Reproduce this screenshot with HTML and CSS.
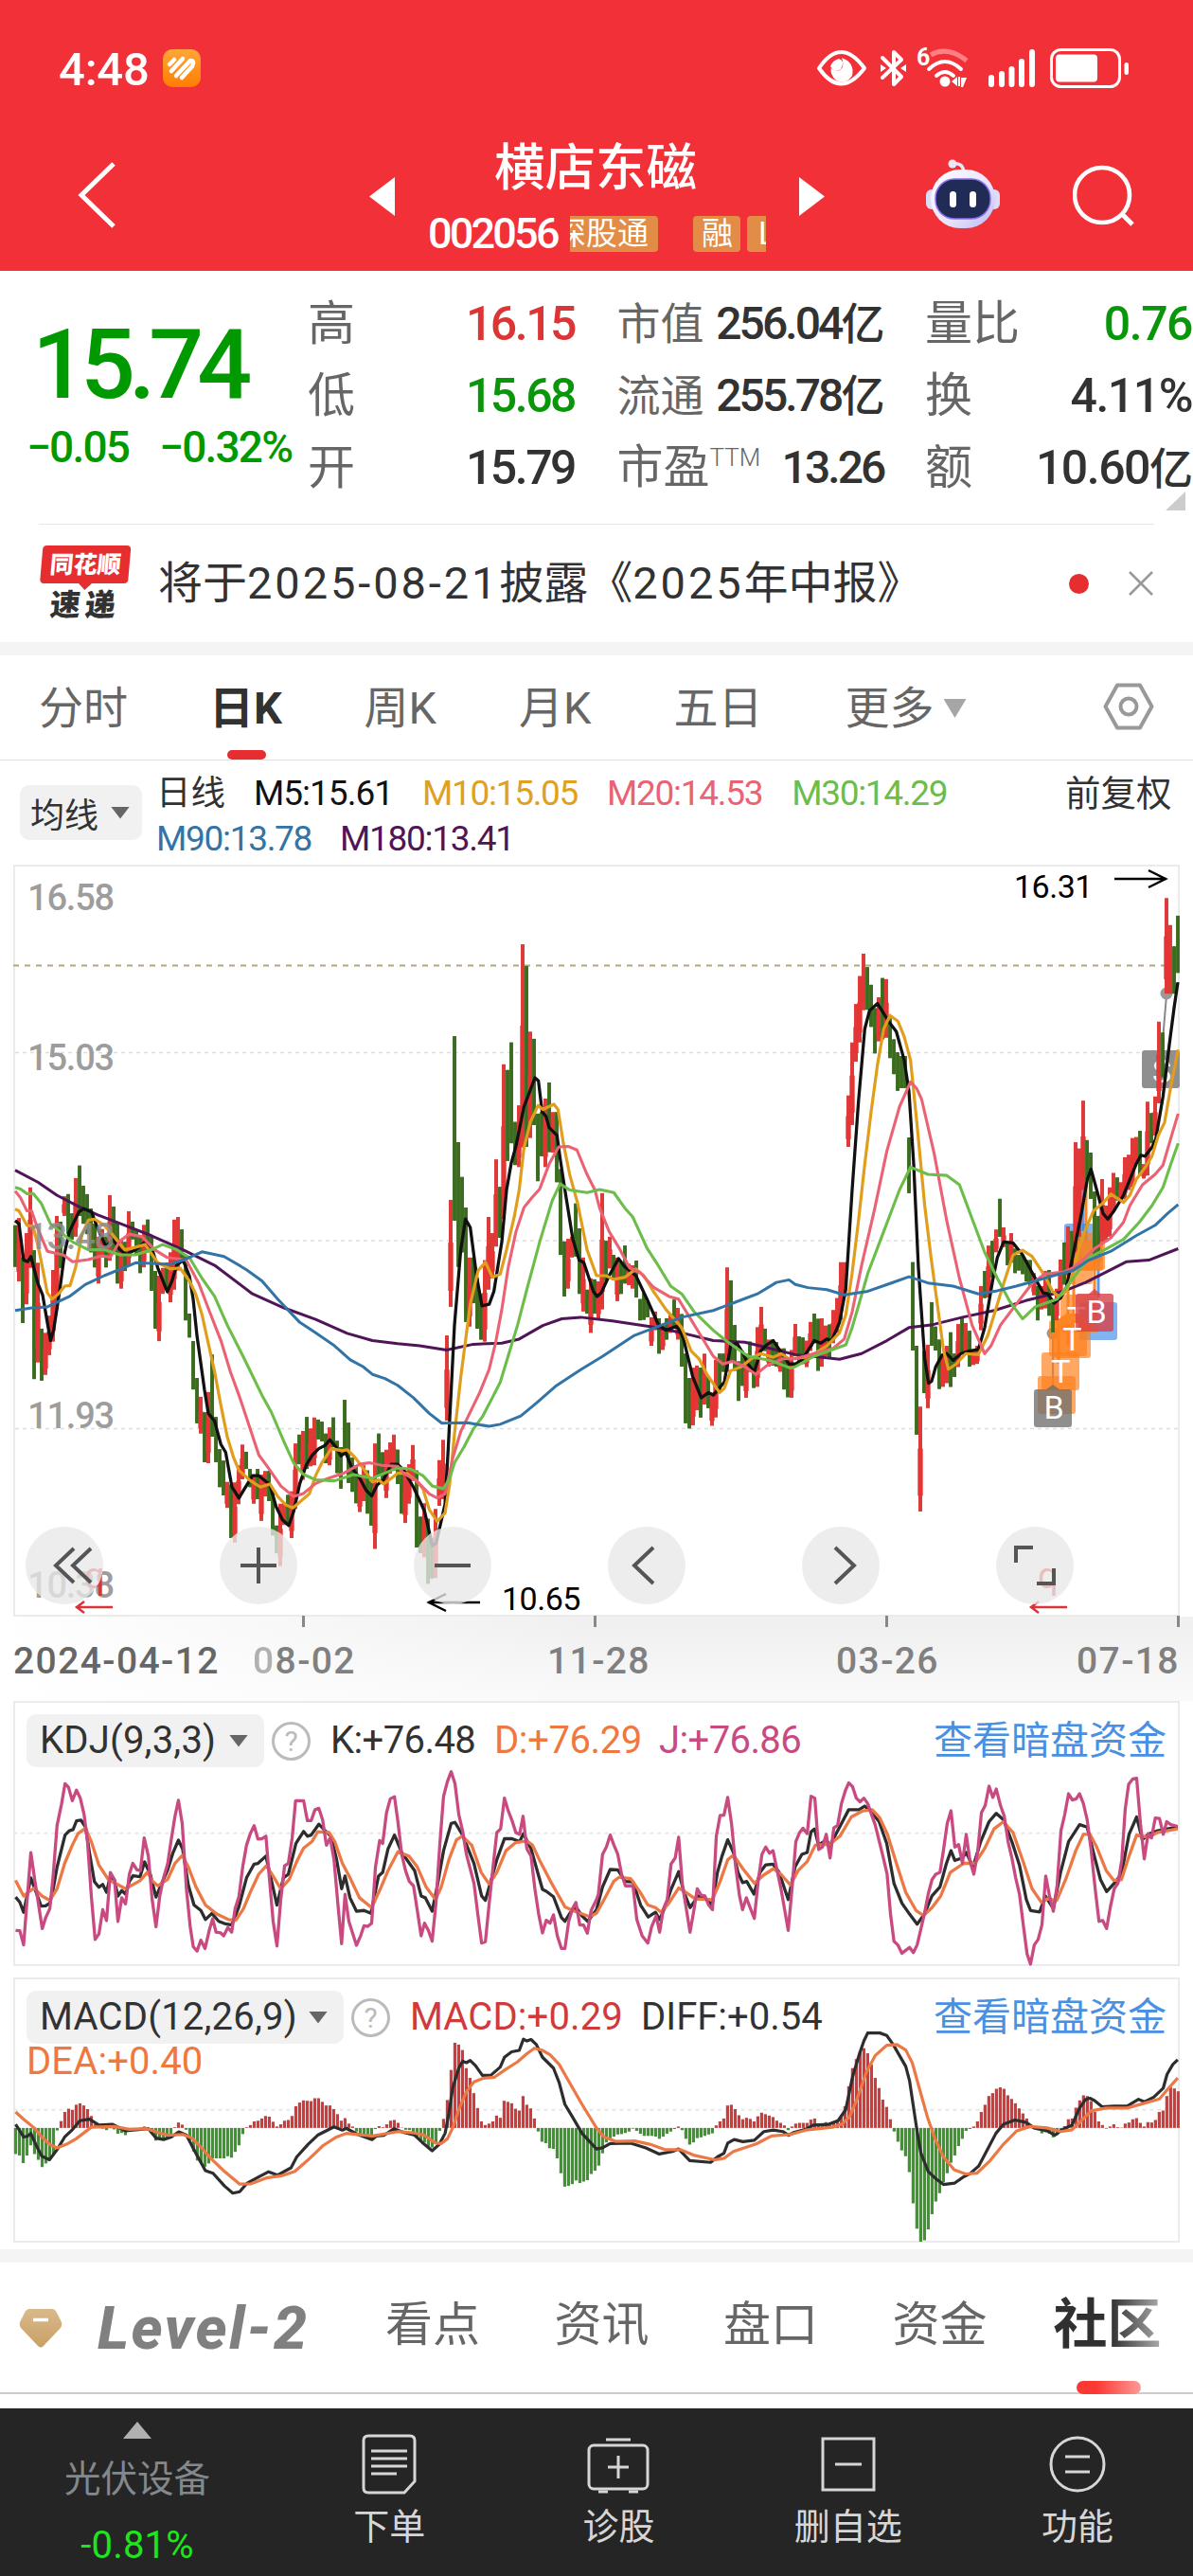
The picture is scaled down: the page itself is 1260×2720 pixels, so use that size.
FILE: index.html
```html
<!DOCTYPE html>
<html lang="zh-CN">
<head>
<meta charset="utf-8">
<title>横店东磁 002056</title>
<link rel="stylesheet" href="styles.css">
</head>
<body>
<div class="app">
  <header class="top">
    <div class="status">
      <div class="status-left"><span class="clock">4:48</span>
        <svg class="app-badge" viewBox="0 0 40 40"><defs><linearGradient id="og" x1="0" y1="0" x2="0" y2="1"><stop offset="0" stop-color="#ffa63a"/><stop offset="1" stop-color="#ff7d00"/></linearGradient></defs><rect width="40" height="40" rx="10" fill="url(#og)"/><g fill="none" stroke="#fff" stroke-width="4.500" stroke-linecap="round" stroke-linejoin="round"><path d="M7 16 L12 11"/><path d="M9 23 L21 10"/><path d="M14 28 L29 12 Q34 12 31 18 L20 30"/></g></svg>
      </div>
      <svg class="status-icons" viewBox="860 48 336 50">
        <g fill="none" stroke="#fff" stroke-width="4">
          <path d="M865 72 Q888 38 913 72 Q888 105 865 72Z" stroke-linejoin="round"/>
          <path d="M932 61 L952 81 L944 89 V55 L952 63 L932 82" stroke-linejoin="round" stroke-linecap="round"/>
          <path d="M983 58 Q1001 48 1021 64" stroke="#ff8084" stroke-width="5"/>
          <path d="M981 73 Q998 57 1015 73" stroke-linecap="round"/>
          <path d="M989 80 Q998 72 1007 80" stroke-linecap="round"/>
          <rect x="1110.500" y="52.500" width="72" height="39" rx="10" stroke-width="3"/>
        </g>
        <g fill="#fff">
          <path d="M877 70 Q879 64 886 62 Q893 64 888 73 Q882 78 878 71 Q876 78 883 85 Q893 90 900 80 Q903 66 889 61 Q893 72 885 75 Q879 75 877 70Z"/>
          <circle cx="998" cy="86" r="5.500"/>
          <path d="M930 68l6 4-6 4zM957 68l-6 4 6 4zM1005 86l6-5v10zM1012 81h2v10h-2zM1015 82h6l-4 10h-2z"/>
          <rect x="1044" y="79" width="6" height="13" rx="3"/><rect x="1055" y="75" width="6" height="17" rx="3"/><rect x="1065.500" y="70" width="6" height="22" rx="3"/><rect x="1076" y="62" width="6" height="30" rx="3"/><rect x="1087" y="52" width="6" height="40" rx="3"/>
          <rect x="1115" y="57.500" width="44" height="29" rx="4"/><rect x="1187.500" y="66" width="4.500" height="13" rx="2.200"/>
          <text x="968" y="69" class="six">6</text>
        </g>
      </svg>
    </div>
    <div class="nav">
      <svg class="back" viewBox="0 0 42 72"><path d="M38 3 L4 36 L38 69" fill="none" stroke="#fff" stroke-width="5"/></svg>
      <svg class="tri-l" viewBox="0 0 27 41"><path d="M27 0V41L0 20.500Z" fill="#fff"/></svg>
      <div class="title">
        <h1>横店东磁</h1>
        <div class="sub"><span class="code">002056</span><span class="tags"><i class="tag first">深股通</i><i class="tag">融</i><i class="tag last">L</i></span></div>
      </div>
      <svg class="tri-r" viewBox="0 0 27 41"><path d="M0 0V41L27 20.500Z" fill="#fff"/></svg>
      <svg class="robot" viewBox="0 0 78 74">
        <defs><linearGradient id="rb" x1="0" y1="0" x2="1" y2="1"><stop offset="0" stop-color="#fff"/><stop offset=".6" stop-color="#e6e3fb"/><stop offset="1" stop-color="#b9b8f5"/></linearGradient></defs>
        <path d="M28 5 Q39 3 40 14" fill="none" stroke="#e9e4f7" stroke-width="3.500"/><circle cx="28" cy="5" r="4.500" fill="#eee6f5"/>
        <rect x="0" y="32" width="12" height="21" rx="6" fill="#dcdcf6"/><rect x="66" y="32" width="12" height="21" rx="6" fill="#dcdcf6"/>
        <rect x="5" y="11" width="68" height="62" rx="31" fill="url(#rb)"/>
        <rect x="10" y="21" width="58" height="42" rx="20" fill="#202c56" stroke="#8d6df0" stroke-width="1.500"/>
        <rect x="25" y="34" width="7" height="17" rx="3.500" fill="#fff"/><rect x="46" y="34" width="7" height="17" rx="3.500" fill="#fff"/>
      </svg>
      <svg class="search" viewBox="0 0 68 68"><circle cx="31" cy="33" r="29" fill="none" stroke="#fff" stroke-width="4.600"/><path d="M51 52 L63 64" stroke="#fff" stroke-width="5"/></svg>
    </div>
  </header>

  <section class="quote">
    <div class="price-box">
      <div class="price">15.74</div>
      <div class="chg"><span>−0.05</span><span>−0.32%</span></div>
    </div>
    <div class="stats">
      <div class="cell c1"><label>高</label><b class="up">16.15</b></div>
      <div class="cell mid"><label>市值</label><b>256.04<em>亿</em></b></div>
      <div class="cell c3"><label>量比</label><b class="down">0.76</b></div>
      <div class="cell c1"><label>低</label><b class="down">15.68</b></div>
      <div class="cell mid"><label>流通</label><b>255.78<em>亿</em></b></div>
      <div class="cell c3"><label>换</label><b>4.11%</b></div>
      <div class="cell c1"><label>开</label><b>15.79</b></div>
      <div class="cell mid"><label class="wide">市盈<sup>TTM</sup></label><b>13.26</b></div>
      <div class="cell c3"><label>额</label><b>10.60<em>亿</em></b></div>
    </div>
    <i class="corner"></i>
  </section>

  <section class="news">
    <div class="ths"><span class="ths-a">同花顺</span><span class="ths-b">速递</span></div>
    <p>将于<span>2025-08-21</span>披露《<span>2025</span>年中报》</p>
    <i class="dot"></i>
    <svg class="close" viewBox="0 0 26 26"><path d="M1 1L25 25M25 1L1 25" stroke="#999" stroke-width="2.600"/></svg>
  </section>

  <nav class="periods">
    <span>分时</span><span class="on">日K</span><span>周K</span><span>月K</span><span>五日</span><span>更多<i class="caret"></i></span>
    <svg viewBox="0 0 54 50"><path d="M15 2.500H39L51.500 25L39 47.500H15L2.500 25Z" fill="none" stroke="#999" stroke-width="4" stroke-linejoin="round"/><circle cx="27" cy="25" r="8.500" fill="none" stroke="#999" stroke-width="4"/></svg>
  </nav>

  <section class="ma">
    <span class="pill">均线<i class="caret"></i></span>
    <div class="ma-list">
      <div><span class="k">日线</span><span class="m5">M5:15.61</span><span class="m10">M10:15.05</span><span class="m20">M20:14.53</span><span class="m30">M30:14.29</span></div>
      <div><span class="m90">M90:13.78</span><span class="m180">M180:13.41</span></div>
    </div>
    <span class="adj">前复权</span>
  </section>

  <section class="kline">
    <svg viewBox="0 913 1260 806">
      <g fill="none">
        <rect x="15" y="914" width="1230" height="792" stroke="#ebebeb" stroke-width="2"/>
        <path d="M16 1111.500H1244M16 1310H1244M16 1508.500H1244" stroke="#dedede" stroke-width="1.500" stroke-dasharray="4 4"/>
        <path d="M14 1019.500H1244" stroke="#b5a77a" stroke-width="2" stroke-dasharray="6 6"/>
        <path d="M320.500 1706v12M628.500 1706v12M936.500 1706v12M1244.500 1706v12" stroke="#888" stroke-width="3"/>
      </g>
      <g class="markers">
        <path d="M1232 1051L1227 1110M1112 1410V1465" stroke="#888" stroke-width="2"/>
        <circle cx="1232" cy="1049" r="6.500" fill="#999"/><circle cx="1112" cy="1408" r="6.500" fill="#999"/>
        <rect x="1206" y="1109" width="40" height="40" rx="3" fill="#8f8f8f"/>
        <text x="1227" y="1143">S</text>
        <path d="M1144 1230V1300M1160 1310V1370" stroke="#5b9bea" stroke-width="3"/>
        <path d="M1147 1240V1310M1140 1258V1330M1128 1350V1420M1134 1350V1400M1118 1395V1440M1156 1310V1366" stroke="#ff8522" stroke-width="3"/>
        <g fill="#2f80e6" fill-opacity=".6"><rect x="1124" y="1292" width="40" height="40" rx="3"/><rect x="1140" y="1375" width="40" height="40" rx="3"/></g>
        <g fill="#ff7f1a" fill-opacity=".68"><rect x="1127" y="1302" width="38" height="40" rx="3"/><rect x="1130" y="1310" width="37" height="31" rx="3"/><rect x="1118" y="1330" width="36" height="26" rx="3"/><rect x="1120" y="1367" width="40" height="40" rx="3"/><rect x="1112" y="1394" width="40" height="40" rx="3"/><rect x="1108" y="1394" width="40" height="38" rx="3"/><rect x="1100" y="1428" width="40" height="40" rx="3"/><rect x="1096" y="1453" width="40" height="40" rx="3"/></g>
        <text x="1137" y="1404">T</text>
        <path d="M1112 1397h40l-14-10h-12z" fill="#ff8522"/>
        <rect x="1136" y="1366" width="40" height="40" rx="3" fill="#d8404a" fill-opacity=".8"/>
        <path d="M1149 1367l7-6 7 6z" fill="#d8404a" fill-opacity=".8"/>
        <rect x="1092" y="1467" width="40" height="40" rx="3" fill="#707070" fill-opacity=".78"/><path d="M1105 1467l7-5 7 5z" fill="#8f7355"/>
        <text x="1132.500" y="1426">T</text><text x="1120.500" y="1460">T</text><text x="1113" y="1498">B</text><text x="1158" y="1397">B</text>
      </g>
      <g id="kdata" transform="translate(0 900) scale(.33333 .54847)"></g>
      <g class="ylab"><text x="29" y="961">16.58</text><text x="29" y="1130">15.03</text><text x="29" y="1319">13.48</text><text x="29" y="1508">11.93</text><text x="29" y="1687">10.38</text></g>
      <g class="ext"><text x="1071" y="948">16.31</text><text x="530" y="1700">10.65</text></g>
      <path d="M1177 928H1232M1213 919L1231 928L1213 937M507 1692H452M471 1683L453 1692L471 1701" fill="none" stroke="#000" stroke-width="2.500"/>
      <g class="exd"><text x="89" y="1677">q</text><text x="1096" y="1677">q</text></g>
      <path d="M119 1697H81M89 1691L81 1697L89 1703M1127 1697H1089M1097 1691L1089 1697L1097 1703" fill="none" stroke="#d9343a" stroke-width="2.500"/>
    </svg>
    <div class="tools">
      <button><svg viewBox="0 0 60 60"><path d="M40 12L21 30L40 48M58 12L39 30L58 48"/></svg></button>
      <button><svg viewBox="0 0 60 60"><path d="M11 30H49M30 11V49"/></svg></button>
      <button><svg viewBox="0 0 60 60"><path d="M11 30H49"/></svg></button>
      <button><svg viewBox="0 0 60 60"><path d="M37 11L17 30L37 49"/></svg></button>
      <button><svg viewBox="0 0 60 60"><path d="M24 11L44 30L24 49"/></svg></button>
      <button><svg viewBox="0 0 60 60"><path d="M10 27V11H28M50 33V49H32"/></svg></button>
    </div>
  </section>
  <div class="xaxis"><span>2024-04-12</span><span class="d2"><i>0</i>8-02</span><span>11-28</span><span>03-26</span><span>07-18</span></div>

  <section class="panel">
    <svg class="plot" viewBox="34.800 41.800 3066.500 731.700" preserveAspectRatio="none"><path d="M36 407H3100" class="mid-dash"/><g id="kdj"></g></svg>
    <div class="panel-head"><span class="pill kdj-pill">KDJ(9,3,3)<i class="caret"></i></span><i class="help">?</i><span class="v k">K:+76.48</span><span class="v d">D:+76.29</span><span class="v j">J:+76.86</span><a>查看暗盘资金</a></div>
  </section>
  <section class="panel second">
    <svg class="plot" viewBox="34.800 804.800 3066.500 731.700" preserveAspectRatio="none"><path d="M36 1170H3100" class="mid-dash"/><g id="macd"></g></svg>
    <div class="panel-head macd-head"><span class="pill macd-pill">MACD(12,26,9)<i class="caret"></i></span><i class="help">?</i><span class="v r">MACD:+0.29</span><span class="v k diff">DIFF:+0.54</span><a>查看暗盘资金</a></div>
    <div class="dea">DEA:+0.40</div>
  </section>

  <nav class="boards">
    <svg viewBox="0 0 46 42"><defs><linearGradient id="gd" x1="0" y1="0" x2="0" y2="1"><stop offset="0" stop-color="#d9b98c"/><stop offset="1" stop-color="#c9a063"/></linearGradient></defs><path d="M11 1H35Q38 1 40 5L45 15Q46 18 44 21L26 40Q23 43 20 40L2 21Q0 18 1 15L6 5Q8 1 11 1Z" fill="url(#gd)"/><path d="M15 12.500H31" stroke="#fff" stroke-width="3.500"/></svg>
    <span class="lv">Level-2</span><span>看点</span><span>资讯</span><span>盘口</span><span>资金</span><span class="on">社区</span>
  </nav>

  <footer class="bar">
    <div class="sector"><i></i><span>光伏设备</span><b>-0.81%</b></div>
    <div class="act"><svg viewBox="0 0 66 66"><path d="M11 3H55Q60 3 60 8V51L49 63H11Q6 63 6 58V8Q6 3 11 3Z"/><path d="M14 19H52M14 27H52M14 35H52M14 43H41"/></svg><span>下单</span></div>
    <div class="act"><svg viewBox="0 0 66 66"><rect x="2" y="13" width="62" height="46" rx="5"/><path d="M20 7H46M33 24V48M22 36H44M12 62H22M44 62H54"/></svg><span>诊股</span></div>
    <div class="act"><svg viewBox="0 0 66 66"><rect x="6" y="6" width="54" height="54"/><path d="M19 33H47"/></svg><span>删自选</span></div>
    <div class="act"><svg viewBox="0 0 66 66"><circle cx="33" cy="33" r="28"/><path d="M20 25H46M20 41H46"/></svg><span>功能</span></div>
  </footer>
</div>
<script src="chart.js"></script>
</body>
</html>
```
FILE: styles.css
```css
* { box-sizing: border-box; }
body { margin: 0; background: #fff; }
.app { width: 1260px; height: 2720px; overflow: hidden; font-family: Roboto, "Noto Sans CJK SC", sans-serif; color: #323232; background: #fff; }
i, em { font-style: normal; }
svg { display: block; flex: none; }
span { white-space: nowrap; }

.top { height: 286px; background: #f13037; color: #fff; }
.status { height: 144px; padding: 48px 64px 46px 62px; display: flex; justify-content: space-between; }
.status-left { display: flex; gap: 14px; align-items: center; }
.clock { font-size: 49px; line-height: 50px; font-weight: 500; width: 96px; letter-spacing: -.2px; padding-top: 2px; }
.app-badge { width: 40px; height: 40px; margin-top: -2px; }
.status-icons { width: 336px; height: 50px; }
.six { font: 700 25px Roboto, sans-serif; }
.nav { height: 142px; display: flex; align-items: flex-start; padding-left: 82px; }
.back { width: 42px; height: 72px; margin-top: 26px; }
.tri-l { width: 27px; height: 41px; margin: 43px 0 0 266px; }
.title { width: 427px; height: 142px; }
.title h1 { margin: 2px 0 0 -3px; font-size: 53.500px; line-height: 64px; font-weight: 500; text-align: center; }
.sub { display: flex; align-items: center; height: 38px; margin: 18px 0 0 35px; }
.code { width: 150px; font-size: 45px; line-height: 38px; font-weight: 500; letter-spacing: -2.800px; }
.tags { width: 207px; height: 38px; display: flex; overflow: hidden; font-size: 33px; line-height: 37px; }
.tag { background: #e28c47; border-radius: 4px; padding: 0 9px; margin-right: 7px; flex: none; width: 50px; }
.tag.first { width: 93px; padding: 0; text-indent: -16px; border-radius: 0 4px 4px 0; margin-right: 37px; }
.tag.last { width: 40px; margin: 0; padding-left: 12px; }
.tri-r { width: 27px; height: 41px; margin: 43px 0 0 0; }
.robot { width: 78px; height: 74px; margin: 24px 0 0 107px; }
.search { width: 68px; height: 68px; margin: 29px 0 0 77px; }

.quote { height: 268px; display: flex; position: relative; padding-top: 18px; }
.quote::after { content: ""; position: absolute; left: 41px; right: 41px; bottom: 0; height: 1px; background: #e6e6e6; }
.price-box { width: 328px; color: #009a00; padding-left: 28px; }
.price { font-size: 102px; line-height: 100px; font-weight: 500; letter-spacing: -7px; margin: 31px 0 0 6px; }
.chg { display: flex; gap: 32px; font-size: 46px; line-height: 50px; margin-top: 12px; font-weight: 500; letter-spacing: -1.800px; }
.stats { width: 932px; display: grid; grid-template-columns: 281px 283px 283px; column-gap: 42.500px; grid-auto-rows: 76px; }
.cell { display: flex; justify-content: space-between; align-items: center; font-size: 50px; line-height: 76px; white-space: nowrap; }
.cell label { color: #666; font-size: 50px; }
.cell.c1 label { margin-left: -3px; }
.cell.mid label { font-size: 46px; }
.cell.mid label.wide { font-size: 49px; }
.cell b { font-weight: 500; letter-spacing: -2.500px; margin-right: 2px; }
.cell.c3 b { letter-spacing: -1.500px; margin-right: 1px; }
.cell em { font-size: 46px; letter-spacing: -1px; }
.cell.mid b { font-size: 48px; letter-spacing: -2.900px; margin-right: 1px; }
.cell.mid b em { letter-spacing: -1px; }
.cell sup { font-size: 26px; line-height: 0; vertical-align: 18px; font-weight: 300; }
.up { color: #dc3535; }
.down { color: #0a960a; }
.corner { position: absolute; left: 1231px; top: 233px; width: 21px; height: 20px; background: #ccc; clip-path: polygon(100% 0, 100% 100%, 0 100%); }

.news { height: 124px; display: flex; align-items: center; padding-left: 42px; }
.ths { width: 96px; height: 80px; transform: skewX(-5deg); font-weight: 900; }
.ths-a { display: block; height: 40px; width: 93px; border-radius: 4px; background: #e62d30; color: #fff; font-size: 25px; line-height: 41px; text-align: center; position: relative; }
.ths-a::after { content: ""; position: absolute; left: 41px; top: 40px; border: 7px solid transparent; border-top-color: #e62d30; border-bottom: 0; }
.ths-b { display: block; font-size: 32px; line-height: 32px; letter-spacing: 5px; margin: 7px 0 0 13px; }
.news p { margin: 0 0 0 29px; width: 962px; font-size: 47px; line-height: 60px; white-space: nowrap; }
.news p span { letter-spacing: 2.900px; }
.dot { width: 21px; height: 21px; border-radius: 50%; background: #e62d30; }
.close { width: 26px; height: 26px; margin-left: 42px; }

.periods { height: 125px; border-top: 14px solid #f4f4f4; border-bottom: 1px solid #e2e2e2; display: flex; padding-left: 41px; font-size: 47px; line-height: 111px; color: #666; }
.periods span { width: 163.500px; position: relative; }
.periods span:nth-child(1) { width: 180px; }
.periods span:nth-child(5) { width: 181px; }
.periods span:nth-child(6) { width: 272px; }
.periods .on { color: #323232; font-weight: 700; }
.periods .on::after { content: ""; position: absolute; left: 19px; bottom: 0; width: 41px; height: 10px; border-radius: 5px; background: #e62d30; }
.periods svg { width: 54px; height: 50px; margin-top: 29px; }
.caret { display: inline-block; width: 20px; height: 13px; background: #666; clip-path: polygon(0 0, 100% 0, 50% 100%); }
.periods .caret { width: 24px; height: 20px; background: #a6a6a6; margin-left: 10px; vertical-align: 6px; }

.ma { height: 110px; display: flex; padding: 11px 22px 0 21px; font-size: 36px; }
.pill { background: #f1f1f1; border-radius: 10px; display: flex; align-items: center; }
.ma .pill { width: 129px; height: 58px; margin-top: 15px; padding-left: 11px; gap: 13px; }
.ma-list { margin-left: 15px; width: 960px; line-height: 48px; }
.ma-list div { display: flex; height: 48px; gap: 30px; letter-spacing: -1.300px; font-size: 37px; }
.ma-list div span + span { margin-right: 1px; }
.ma-list .m5 { letter-spacing: -1px; }
.ma-list .k { font-size: 36.500px; letter-spacing: 0; }
.m5 { color: #111; } .m10 { color: #e0a020; } .m20 { color: #ea6274; } .m30 { color: #6cbd49; } .m90 { color: #3274a6; } .m180 { color: #4f1557; }
.adj { line-height: 48px; font-size: 37.500px; }

.kline { height: 806px; position: relative; background: linear-gradient(90deg, #fff, rgba(255,255,255,0) 50%), linear-gradient(#fff 794px, #f0f0f0 794px); }
.kline > svg { width: 1260px; height: 806px; position: relative; }
.kline text { font-family: Roboto, sans-serif; }
.ylab { font-size: 38px; fill: #8c8c8c; fill-opacity: .85; letter-spacing: -1.200px; font-weight: 500; }
.ext { font-size: 34px; letter-spacing: -.5px; }
.exd { font-size: 38px; fill: #d9343a; }
.markers text { font-size: 34px; fill: #fff; text-anchor: middle; }
.tools { position: absolute; left: 27px; top: 699px; display: flex; gap: 123px; }
.tools button { width: 82px; height: 82px; padding: 11px; border: 0; border-radius: 50%; background: rgba(232, 232, 232, .78); }
.tools svg { width: 60px; height: 60px; fill: none; stroke: #555; stroke-width: 4px; }
.xaxis { height: 77px; display: flex; padding: 7px 0 0 14px; font-size: 39px; line-height: 56px; font-weight: 500; color: #808080; letter-spacing: 1.400px; background: linear-gradient(90deg, #fff, rgba(255,255,255,0) 50%), linear-gradient(#f0f0f0, #fafafa); }
.xaxis span { width: 305px; flex: none; }
.xaxis span:first-child { width: 253px; color: #666; }
.xaxis .d2 { width: 311px; }
.xaxis .d2 i { opacity: .6; }
.xaxis span:nth-child(4) { width: 254px; }
.xaxis span:nth-child(5) { width: 110px; }

.panel { height: 280px; margin: 0 14px; border: 2px solid #ebebeb; position: relative; background: #fff; }
.panel.second { margin-top: 12px; }
.plot { position: absolute; left: -2px; top: -2px; width: 1232px; height: 280px; }
.plot polyline, #kdata polyline { fill: none; vector-effect: non-scaling-stroke; stroke-linejoin: round; }
.mid-dash { stroke: #e8e8e8; stroke-width: 2px; stroke-dasharray: 4 4; vector-effect: non-scaling-stroke; }
.panel-head { position: relative; display: flex; align-items: center; height: 56px; margin: 12px 0 0 12px; font-size: 40px; line-height: 58px; }
.panel-head .pill { height: 56px; padding-left: 14px; justify-content: space-between; padding-right: 17px; letter-spacing: .2px; }
.kdj-pill { width: 251px; }
.macd-pill { width: 335px; }
.help { width: 41px; height: 41px; border: 3px solid #bbb; border-radius: 50%; color: #bbb; font-size: 30px; line-height: 36px; text-align: center; margin: 0 21px 0 8px; }
.v { width: 173px; letter-spacing: -.6px; }
.v.d { width: 174px; color: #ef7840; letter-spacing: -.4px; } .v.j { color: #c84a80; width: 290px; } .v.r { color: #d13a3a; width: 244px; letter-spacing: .1px; } .v.diff { width: 309px; letter-spacing: 0; }
.panel-head a { color: #4a90e2; font-size: 41px; }
.dea { position: relative; margin: -8px 0 0 12px; font-size: 40px; line-height: 54px; color: #ef7840; letter-spacing: .1px; }

.boards { margin-top: 7px; height: 153px; border-top: 14px solid #f4f4f4; border-bottom: 2px solid #ccc; display: flex; align-items: center; padding: 0 0 0 20px; font-size: 50px; line-height: 60px; color: #666; position: relative; }
.boards svg { width: 46px; height: 42px; }
.boards span { width: 178.500px; margin-top: -5px; }
.boards .lv { width: 304px; margin: 2px 0 0 37px; font: italic 800 63px Roboto, sans-serif; color: #808080; letter-spacing: 2.300px; }
.boards span:nth-of-type(5) { width: 170px; }
.boards .on { width: 120px; font-size: 57px; font-weight: 700; line-height: 70px; background: linear-gradient(90deg, #303030 50%, #bbb); background-clip: text; color: transparent; }
.boards::after { content: ""; position: absolute; left: 1137px; bottom: -2px; width: 68px; height: 14px; border-radius: 7px; background: linear-gradient(90deg, #fb3832 30%, #fb9a98); }

.bar { margin-top: 15px; height: 178px; background: #252525; display: flex; color: #d6d6d6; font-size: 38px; }
.sector { width: 290px; text-align: center; color: #82888c; display: flex; flex-direction: column; align-items: center; }
.sector i { width: 30px; height: 18px; background: #b0b0b0; clip-path: polygon(50% 0, 100% 100%, 0 100%); margin-top: 14px; }
.sector span { font-size: 38.500px; line-height: 50px; margin-top: 18px; }
.sector b { color: #1ee61e; font-weight: 400; font-size: 40px; line-height: 50px; margin-top: 20px; letter-spacing: .2px; }
.act { width: 242.300px; display: flex; flex-direction: column; align-items: center; padding-top: 26px; }
.act svg { width: 66px; height: 66px; fill: none; stroke: #d6d6d6; stroke-width: 3px; }
.act span { line-height: 50px; margin-top: 8px; }
```
FILE: chart.js
```js
const NS = 'http://www.w3.org/2000/svg';
function add(parent, tag, attrs) {
  const e = document.createElementNS(NS, tag);
  for (const k in attrs) e.setAttribute(k, attrs[k]);
  parent.appendChild(e);
}
// Each series is a list of segments; segment n starts at n * step.
function line(id, color, width, step, segments) {
  const pts = segments.map((s, n) => s.trim().split(/\s+/).map(p => {
    const [x, y] = p.split(',').map(Number);
    return (x + n * step) + ',' + y;
  }).join(' ')).join(' ');
  add(document.getElementById(id), 'polyline', { points: pts, stroke: color, 'stroke-width': width });
}

const candles = `g718-798 r704-826 g780-906 r733-870 r645-800 g766-1014 r790-982 g917-1017 r925-1006 r892-968 r804-942 r700-880 g711-800 r662-700 g658-735 g695-745 r627-740 g603-700 g642-715 g658-735 g686-770 g715-799 r740-830 r725-775 g740-799 r660-786 g682-770 g712-830 r745-840 g750-806 r691-797 g711-745 g728-775 g740-810 r717-799 g707-770 g740-844 g806-917 r815-941 r800-850 g790-840 r770-866 r707-842 r702-805 g726-790 g775-901 g888-934 g941-1034 g1012-1099 r1048-1119 g1078-1174 r1039-1176 g967-1125 g1087-1174 g1149-1222 g1171-1238 r1212-1262 g1217-1320 r1213-1329 r1180-1255 r1140-1207 g1154-1187 g1187-1222 r1200-1254 g1187-1245 r1198-1287 r1191-1240 g1191-1249 g1230-1315 g1296-1349 r1254-1374 r1252-1295 g1237-1295 r1230-1320 r1138-1264 g1121-1178 r1114-1208 g1087-1187 r1109-1182 r1088-1180 g1092-1130 g1096-1134 g1119-1176 r1107-1180 g1088-1145 g1133-1195 g1145-1225 g1054-1160 g1098-1214 g1165-1231 g1180-1253 r1200-1270 r1180-1249 g1190-1273 g1210-1296 r1138-1341 g1119-1200 g1155-1215 r1150-1243 r1136-1196 r1121-1190
g1150-1216 g1187-1273 r1190-1291 r1178-1254 r1141-1210 g1190-1338 g1279-1349 r1253-1357 g1283-1408 g1320-1398 r1264-1397 r1170-1258 r1131-1245 r930-1094 r669-875 g354-709 g558-798 g625-770 g684-904 r780-913 g780-868 g820-917 g850-938 r785-942 r702-842 r733-820 r591-759 g644-742 r408-706 g419-594 g366-560 g519-602 r487-606 r177-568 g219-567 r345-550 g359-525 g503-633 g500-585 r474-606 g443-577 r500-578 g500-635 g610-775 g749-855 r744-840 r740-780 g676-778 g724-850 r780-884 g842-888 r820-925 g822-888 r826-900 r656-880 g748-825 r740-801 g775-823 r780-864 g790-850 g757-830 r792-833 r795-840 g786-857 g860-901 g848-900 g864-895 r895-950 r884-920 g897-965 r910-958 g897-938 r888-925 g861-915 r877-938 g889-990 g965-1099 g1012-1109 r992-1103 r988-1074 g992-1088 r965-1063 g1010-1070 r1040-1104 r977-1088 g965-1040 g965-1000 r799-1000 g824-980 g910-998 g980-1056 g960-1027 r965-1050 g942-1000 g970-1031 r914-1029 r875-960 g917-960 r938-990 g938-988 g943-990 r955-1000 g955-1034 g975-1049 r958-1050
r908-970 g932-980 g934-985 r940-991 r904-960 g888-945 g898-998 r897-990 r911-970 g909-975 r881-945 r858-925 r789-900 r789-855 r468-567 r366-525 r292-403 r238-366 r195-304 g221-303 g255-336 g300-387 r279-364 g242-360 r244-357 g320-396 g360-427 g385-459 g392-454 g392-454 g549-656 g789-959 g950-1121 r1067-1269 g960-1041 r948-1070 g866-950 g913-959 g938-1033 r970-1029 r950-1022 g924-1029 g965-1010 r908-991 g897-965 r906-965 g921-990 r960-987 r950-985 r835-920 g806-858 r757-857 g748-818 r726-770 g667-740 r722-760 g750-795 r733-790 g763-810 g775-805 g775-812 g785-826 g785-835 r810-853 g835-901 r835-880 r806-878 g804-892 g864-924 r840-901 r784-860 g751-832 r720-814 g729-800 r558-770 r570-740 r478-650 g554-630 g578-667 g653-775 g700-775 r629-750 r680-750 r645-740 r617-690 g626-670 r635-668 r587-668 r582-650 r550-645 r548-600 g536-620 r600-628 r480-622 g502-560 r470-545 r326-483 g347-433 r88-272 r140-272 g181-272 g122-232`.split(/\s+/);
const kd = document.getElementById('kdata');
candles.forEach((c, i) => {
  const [t, b] = c.slice(1).split('-').map(Number);
  const x = 48 + i * 12, red = c[0] === 'r';
  add(kd, 'rect', { x: x - 6, y: t, width: 12, height: b - t, fill: red ? '#de3a38' : '#4a7a2e' });
  add(kd, 'rect', red
    ? { x: x - 8, y: t + (b - t) * .4, width: 16, height: (b - t) * .45, fill: '#e63333' }
    : { x: x - 4, y: t, width: 9, height: b - t, fill: '#3c6b20' });
});

line('kdata', '#4f1557', 3, 1260, [
'48,612 120,635 180,660 250,682 310,698 400,719 480,738 580,765 680,795 800,850 900,877 1000,899 1100,926 1180,940 1260,946',
'70,950 155,958 240,947 330,945 385,937 460,911 520,898 580,895 680,902 820,915 900,925 1000,940 1100,943 1180,955 1260,967',
'80,972 140,976 210,965 290,940 360,915 430,910 530,895 630,882 730,863 850,845 920,828 1050,788 1120,785 1213,763']);
line('kdata', '#111', 3.3, 1260, [
'48,709 60,715 75,785 88,788 98,778 120,830 135,852 150,905 160,940 170,920 190,840 205,770 220,730 250,692 265,686 290,692 310,725 335,758 360,746 380,765 400,774 430,765 460,750 480,760 500,800 530,846 545,825 560,795 580,785 600,815 612,860 624,930 648,1035 660,1080 680,1095 700,1140 715,1155 735,1222 757,1243 780,1220 800,1200 820,1200 855,1217 875,1260 895,1285 915,1296 930,1270 950,1215 970,1180 990,1160 1010,1148 1030,1142 1045,1131 1065,1145 1080,1162 1095,1155 1115,1185 1140,1205 1160,1228 1178,1239 1195,1218 1215,1208 1240,1178 1260,1178',
'20,1190 50,1222 85,1268 110,1335 122,1330 150,1255 160,1150 180,910 200,765 215,706 230,722 250,815 267,873 290,870 305,845 330,750 345,650 360,598 375,565 400,490 435,434 446,440 458,500 470,508 480,530 505,545 515,590 530,650 555,745 575,785 590,790 620,845 632,855 645,848 670,815 700,782 720,798 755,815 790,860 825,908 850,920 885,912 905,935 935,1010 962,1050 985,1040 1000,1045 1035,1020 1055,950 1075,945 1095,965 1110,985 1130,1000 1150,960 1170,948 1190,940 1210,958 1240,985 1260,985',
'20,978 60,940 80,945 100,937 115,940 140,905 160,840 180,650 200,480 220,340 235,305 260,291 275,305 295,325 320,345 345,400 360,460 375,600 390,800 410,975 422,1022 432,1018 445,990 465,968 480,965 500,978 525,965 550,960 580,957 600,915 625,825 640,780 660,750 690,752 720,775 760,820 785,848 800,850 820,868 840,858 858,840 880,775 905,700 925,630 937,610 955,650 975,695 990,706 1010,690 1040,660 1080,600 1095,583 1108,585 1130,568 1142,552 1165,470 1185,370 1200,300 1212,250']);
line('kdata', '#e09e1c', 3.2, 1260, [
'48,687 60,690 85,718 105,720 125,770 150,848 165,860 185,850 205,835 222,834 240,798 260,735 280,708 300,706 330,718 355,735 395,765 430,760 460,755 500,790 540,802 570,800 600,825 620,850 640,890 660,945 680,1000 700,1065 720,1125 740,1165 757,1190 790,1208 825,1222 855,1216 880,1240 905,1256 928,1262 955,1248 980,1235 1000,1200 1020,1175 1050,1148 1085,1152 1100,1150 1125,1165 1150,1185 1180,1212 1200,1208 1215,1216 1240,1205 1260,1195',
'30,1196 60,1210 80,1225 100,1265 125,1288 150,1272 165,1215 180,1120 200,1010 230,870 255,805 278,789 300,818 325,812 345,765 370,700 385,650 400,570 420,520 445,487 460,495 495,485 508,495 525,560 545,620 570,675 600,765 630,815 660,815 685,822 720,818 755,802 780,815 810,845 850,880 900,915 930,960 955,975 980,1005 1020,1040 1035,1032 1055,998 1090,990 1120,975 1150,965 1190,972 1215,965 1240,975 1260,974',
'30,972 60,965 100,950 140,925 160,890 180,810 200,710 220,600 240,500 260,410 280,340 300,314 325,325 345,355 365,400 385,520 410,680 430,780 450,870 470,960 485,995 510,985 540,965 580,967 610,930 640,870 660,830 690,775 720,766 750,778 790,815 815,845 835,855 860,845 880,810 900,760 920,725 945,690 975,675 1000,658 1040,674 1060,660 1080,630 1110,605 1130,585 1150,545 1170,520 1190,450 1213,380']);
line('kdata', '#ea6274', 3.1, 1260, [
'48,652 65,665 85,690 100,690 120,725 150,768 200,775 230,788 280,784 320,777 350,779 380,748 410,735 450,740 490,765 530,780 590,785 630,830 660,878 700,940 730,1000 760,1050 790,1105 820,1160 850,1185 890,1220 930,1240 960,1235 1000,1215 1040,1205 1090,1195 1140,1178 1170,1175 1210,1180 1260,1182',
'20,1196 60,1210 100,1235 125,1243 150,1235 175,1165 200,1115 220,1090 260,1040 290,995 310,945 330,880 350,800 375,730 400,684 425,665 450,648 480,600 510,567 540,566 568,573 600,620 625,650 640,685 670,730 700,760 735,800 770,810 810,837 860,855 890,860 930,900 970,940 1000,970 1030,985 1060,980 1100,990 1135,1005 1170,988 1220,975 1260,975',
'60,965 120,955 155,937 180,885 210,795 250,690 290,575 330,490 365,442 385,455 400,475 440,580 480,710 520,820 560,910 600,965 620,950 650,910 700,870 750,830 790,812 850,808 880,800 920,780 950,762 1000,742 1040,712 1060,680 1100,640 1140,620 1165,602 1190,550 1213,503']);
line('kdata', '#6cbd49', 3.1, 1260, [
'48,645 65,648 85,657 105,657 130,675 160,715 190,730 230,750 280,765 330,765 380,775 430,775 480,765 515,755 560,765 600,780 640,820 680,855 720,910 770,970 830,1045 860,1078 900,1135 930,1175 960,1197 1000,1208 1060,1210 1120,1198 1180,1205 1220,1195 1260,1185',
'40,1187 80,1200 110,1220 145,1225 165,1205 180,1175 210,1145 240,1110 270,1085 300,1050 325,1020 350,970 380,910 410,840 450,750 490,670 515,638 545,650 600,655 640,649 685,655 720,685 745,702 790,762 820,790 865,835 900,850 940,885 1000,920 1040,940 1110,970 1180,978 1245,993 1260,990',
'60,970 160,948 180,915 230,810 280,730 330,650 365,606 420,620 480,622 520,640 560,705 600,770 640,820 680,865 720,898 760,875 830,860 880,820 930,780 980,765 1040,745 1090,712 1130,680 1165,645 1190,600 1213,560']);
line('kdata', '#3274a6', 3, 1260, [
'48,882 100,877 150,875 220,855 270,832 330,815 400,798 430,790 540,793 580,785 640,769 710,778 780,803 830,825 880,860 950,905 1000,925 1060,950 1110,977 1150,990 1180,1005 1220,1013 1260,1026',
'50,1050 100,1080 140,1099 220,1098 290,1105 325,1101 390,1085 440,1060 500,1028 580,996 650,970 750,930 850,907 900,895 1000,882 1070,866 1140,850 1200,828 1240,823 1260,832',
'40,838 100,842 155,852 230,845 300,830 360,817 420,829 500,835 580,850 640,844 700,835 760,825 830,813 880,805 930,785 1000,768 1080,738 1140,718 1180,695 1213,678']);

line('kdj', '#2d2d2d', 3.3, 1568, [
'41,583 52,597 62,625 81,530 95,570 108,608 120,607 131,600 140,560 150,500 162,450 171,412 182,400 192,397 201,373 213,371 225,390 235,460 248,540 260,556 270,548 280,570 290,525 300,535 310,580 320,565 330,575 340,540 350,524 368,527 380,486 395,520 410,583 425,545 440,510 455,460 469,426 480,450 495,550 510,605 528,620 540,645 557,628 575,650 590,656 609,660 628,610 648,530 668,492 678,490 699,470 712,530 728,605 745,530 758,520 778,435 798,402 808,415 818,412 838,382 855,400 870,415 885,480 898,560 907,525 920,585 937,622 957,620 975,628 995,525 1006,515 1020,450 1037,412 1056,460 1090,510 1107,580 1118,585 1136,622 1150,550 1166,455 1186,380 1196,377 1216,412 1246,490 1266,580 1276,592 1290,540 1306,480 1326,422 1346,422 1366,430 1376,408 1396,450 1426,562 1436,567 1455,582 1476,640 1485,650 1500,625 1515,612 1530,635 1545,650 1568,618',
'16,555 36,507 56,508 76,540 96,541 116,605 136,638 155,625 166,645 180,612 196,562 216,513 230,570 246,612 268,580 290,590 304,605 318,515 330,470 345,425 360,460 372,515 384,543 395,540 414,575 430,515 445,494 464,492 480,515 504,590 522,500 540,465 554,460 564,403 573,395 584,440 604,425 614,440 624,420 644,380 663,342 690,342 705,332 720,345 743,375 763,435 782,545 803,600 823,630 843,658 862,630 882,580 903,555 920,490 932,455 942,482 962,475 972,460 990,500 1010,430 1032,375 1051,352 1070,370 1092,430 1112,495 1130,590 1141,620 1165,624 1180,580 1201,615 1220,515 1241,430 1270,383 1290,390 1310,475 1325,535 1341,568 1361,545 1380,520 1400,410 1420,362 1435,425 1450,410 1475,400 1528,390']);
line('kdj', '#ec7845', 3.3, 1568, [
'41,537 62,580 90,558 110,580 131,592 150,560 170,490 190,440 205,408 225,393 240,430 260,495 285,535 330,560 368,538 388,514 400,538 415,552 440,535 460,490 479,468 495,500 515,555 540,605 570,630 600,645 620,647 640,615 660,565 680,520 700,497 715,520 738,560 760,535 780,485 798,448 820,430 835,403 865,405 880,430 900,490 920,530 945,585 977,612 1000,560 1020,510 1046,458 1075,470 1097,500 1120,555 1145,590 1160,555 1180,480 1200,425 1215,415 1240,440 1265,515 1286,547 1306,515 1330,455 1355,433 1385,428 1400,440 1420,485 1450,545 1485,610 1510,622 1550,637 1568,628',
'20,590 45,540 60,528 90,532 115,570 135,605 155,612 170,625 190,600 216,558 235,570 260,588 305,590 325,540 345,480 360,467 385,505 415,545 440,522 465,505 485,520 510,550 530,510 554,485 575,440 614,437 640,415 670,362 700,345 725,342 745,365 765,410 790,495 813,570 840,620 860,634 882,612 905,580 930,515 965,490 995,490 1020,450 1045,395 1070,375 1095,405 1120,480 1145,560 1170,598 1185,588 1210,592 1235,530 1260,455 1280,410 1297,410 1315,445 1340,510 1360,537 1380,535 1400,470 1420,412 1450,418 1475,405 1528,395']);
line('kdj', '#c84a80', 3.3, 1568, [
'41,675 52,676 62,715 81,460 92,540 111,670 120,640 131,615 140,520 150,385 162,325 171,270 180,280 190,317 201,288 211,310 221,355 230,430 240,580 250,700 260,685 270,618 280,648 290,515 301,535 310,650 320,585 330,602 340,520 349,490 360,508 369,510 379,420 390,470 400,590 410,665 420,580 430,530 441,490 450,425 460,360 469,316 479,380 490,560 500,665 508,720 518,732 528,702 539,725 550,675 559,643 568,680 580,682 588,690 599,667 609,680 618,615 628,582 638,500 648,440 658,408 668,386 678,423 689,422 699,415 708,530 718,650 728,718 738,590 748,497 758,490 768,420 777,317 798,317 808,372 818,372 828,342 838,338 848,370 858,440 868,420 878,480 888,600 898,712 907,575 917,650 937,716 948,690 957,662 967,664 977,655 987,500 998,427 1006,435 1016,350 1026,312 1037,306 1046,375 1056,465 1066,510 1076,540 1087,552 1097,620 1107,690 1116,655 1126,675 1136,705 1146,600 1156,440 1166,305 1176,265 1186,237 1196,270 1206,355 1216,400 1226,465 1246,545 1256,630 1266,710 1276,706 1286,600 1296,500 1306,405 1316,395 1326,310 1336,345 1346,372 1356,405 1366,410 1375,360 1385,450 1396,470 1406,560 1416,630 1426,682 1436,647 1446,655 1455,632 1465,690 1476,725 1485,725 1495,650 1505,615 1514,598 1524,660 1534,660 1544,683 1554,620 1568,590',
'5,575 16,465 26,445 36,412 46,440 56,465 66,520 76,552 96,552 106,645 120,690 135,710 145,665 157,635 166,680 176,615 186,590 196,492 207,475 216,418 226,550 236,615 246,680 256,620 265,560 275,578 285,580 295,605 305,618 315,415 325,358 335,357 345,308 355,380 366,500 376,580 384,618 394,585 405,615 415,642 425,540 435,465 445,445 455,462 464,455 475,510 485,560 495,620 504,675 514,560 524,430 534,405 543,393 554,408 564,305 574,310 584,452 594,445 604,410 614,475 624,392 634,385 644,325 654,290 663,268 673,278 683,310 693,320 703,310 713,325 733,385 753,470 764,520 773,630 782,705 792,715 803,738 813,730 823,722 833,736 843,715 862,630 872,575 882,535 892,520 903,515 912,455 922,380 932,345 942,445 952,438 962,490 972,410 982,485 992,520 1002,460 1012,350 1022,330 1032,277 1042,308 1051,285 1062,330 1072,360 1082,430 1092,475 1102,530 1112,575 1122,660 1132,740 1141,768 1151,715 1161,700 1171,660 1181,525 1191,580 1201,622 1211,550 1221,400 1231,355 1241,298 1251,315 1261,312 1270,298 1280,325 1290,370 1300,450 1311,560 1321,650 1331,648 1341,670 1351,610 1361,560 1371,545 1381,480 1390,340 1399,272 1410,257 1420,255 1430,380 1440,478 1450,408 1459,420 1469,365 1480,366 1490,410 1499,375 1510,383 1528,388']);

const hist = [-72,-76,-97,-76,-48,-72,-88,-108,-98,-86,-72,-7,19,44,53,50,64,68,62,52,33,10,4,-2,-6,1,-4,-16,-14,-20,-6,-3,-3,-1,4,-2,-15,-35,-32,-32,-30,-28,2,15,9,-5,-34,-65,-90,-96,-107,-98,-84,-84,-84,-84,-78,-82,-66,-48,-17,2,8,18,20,26,33,31,17,4,10,20,22,33,60,70,76,75,74,82,82,72,62,62,52,38,20,27,12,4,-10,-16,-22,-24,-28,-3,5,2,10,20,22,14,1,-5,-6,-12,-24,-38,-40,-52,-54,-44,-8,25,77,160,235,230,215,165,138,96,55,18,8,12,18,34,28,75,72,68,53,48,88,64,54,26,-10,-38,-42,-56,-58,-84,-125,-162,-160,-155,-145,-152,-148,-144,-127,-118,
-104,-70,-40,-34,-24,-18,-17,-14,-10,-2,-8,-16,-22,-22,-22,-24,-30,-24,-16,-10,-3,4,-6,-30,-46,-40,-28,-26,-22,-18,-15,7,18,26,62,64,52,35,24,28,25,18,32,42,38,34,30,20,14,7,-6,4,12,14,14,14,23,26,12,12,16,12,16,22,30,60,115,165,190,210,220,206,175,138,110,78,58,24,-10,-38,-62,-78,-122,-208,-278,-314,-310,-280,-238,-203,-180,-150,-125,-96,-76,-50,-30,-8,-3,4,18,44,64,88,96,108,112,108,90,80,68,54,40,26,10,3,-6,-15,-12,-16,-26,-20,-10,5,24,26,56,76,90,88,74,44,18,8,-2,4,10,2,1,12,15,24,27,14,4,16,15,22,44,48,88,112,109,101];
const md = document.getElementById('macd');
hist.forEach((v, i) => add(md, 'rect', { x: 37 + i * 9.955, y: v > 0 ? 1220 - v : 1220, width: 8, height: Math.abs(v), fill: v > 0 ? '#cf3b3b' : '#3c962b' }));
line('macd', '#2d2d2d', 3.2, 1568, [
'41,1210 52,1228 62,1245 72,1243 81,1235 95,1268 110,1298 130,1308 150,1280 170,1245 190,1225 210,1200 235,1196 260,1212 295,1210 330,1228 390,1222 410,1248 430,1252 450,1245 470,1231 490,1240 515,1290 540,1338 560,1345 590,1380 612,1400 630,1396 650,1372 680,1355 706,1341 730,1350 765,1330 780,1300 810,1265 835,1240 878,1217 900,1226 910,1221 940,1238 978,1252 990,1242 1010,1240 1036,1222 1060,1232 1090,1240 1110,1260 1136,1283 1155,1265 1170,1235 1180,1180 1190,1110 1206,1055 1216,1036 1226,1040 1236,1034 1250,1048 1268,1075 1290,1075 1315,1052 1326,1025 1345,1010 1365,1006 1376,975 1385,980 1396,976 1410,990 1426,1025 1455,1055 1470,1095 1485,1155 1505,1190 1530,1235 1568,1278',
'16,1275 36,1263 90,1262 130,1275 165,1292 200,1285 216,1278 245,1310 300,1315 318,1300 335,1290 345,1262 362,1252 385,1258 415,1254 440,1230 465,1226 490,1230 505,1240 520,1232 550,1224 570,1212 610,1210 635,1200 655,1170 673,1080 690,1020 703,980 713,958 745,958 763,965 780,990 813,1050 823,1090 833,1160 843,1230 853,1290 872,1340 892,1360 912,1376 942,1372 965,1355 982,1346 1005,1325 1030,1275 1050,1235 1070,1210 1100,1198 1130,1205 1150,1220 1185,1228 1205,1240 1225,1225 1250,1212 1270,1165 1285,1142 1297,1138 1310,1145 1330,1162 1360,1160 1395,1160 1425,1141 1440,1148 1465,1135 1490,1110 1500,1072 1515,1045 1528,1032']);
line('macd', '#ec7845', 3.2, 1568, [
'41,1176 62,1196 90,1220 110,1245 130,1265 150,1275 175,1265 200,1250 240,1218 300,1216 340,1224 385,1222 415,1232 440,1240 480,1238 505,1248 530,1275 555,1305 590,1340 630,1375 660,1374 700,1358 740,1352 775,1340 810,1308 850,1268 885,1245 910,1235 980,1242 1046,1230 1090,1234 1115,1240 1145,1262 1160,1263 1176,1250 1190,1220 1206,1170 1226,1120 1246,1093 1270,1083 1300,1080 1330,1058 1360,1038 1385,1015 1405,1000 1426,1006 1446,1018 1470,1045 1500,1100 1530,1155 1568,1220',
'20,1245 50,1257 100,1256 140,1265 180,1280 220,1280 255,1295 310,1308 335,1304 360,1285 420,1264 460,1242 510,1238 550,1226 620,1218 645,1210 665,1190 685,1140 710,1065 733,1020 763,992 790,990 813,1005 830,1040 850,1115 870,1190 890,1250 912,1300 940,1335 970,1347 1000,1345 1035,1310 1070,1265 1105,1228 1140,1216 1185,1220 1220,1230 1250,1225 1270,1205 1300,1173 1340,1165 1395,1165 1440,1152 1480,1140 1500,1115 1528,1082']);
```
